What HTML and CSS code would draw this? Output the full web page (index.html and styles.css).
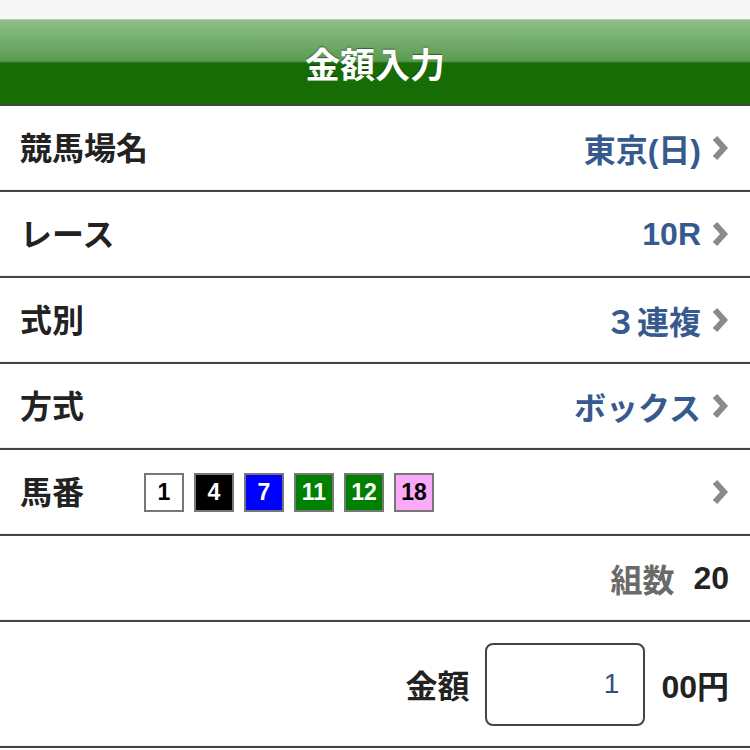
FILE: index.html
```html
<!DOCTYPE html>
<html lang="ja">

<head>
    <meta charset="UTF-8">
    <meta name="viewport" content="width=device-width, initial-scale=1.0">
    <title>金額入力</title>
    <link rel="stylesheet" href="styles.css">
</head>

<body>

    <div class="topbar"></div>
    <header class="title-bar">
        <h1>金額入力</h1>
    </header>

    <ul class="list">
        <li class="row">
            <span class="label">競馬場名</span>
            <span class="value">東京(日)</span>
            <svg class="chevron" width="18" height="26" viewBox="0 0 18 26"><polyline points="4,3 13,13 4,23" /></svg>
        </li>
        <li class="row">
            <span class="label">レース</span>
            <span class="value">10R</span>
            <svg class="chevron" width="18" height="26" viewBox="0 0 18 26"><polyline points="4,3 13,13 4,23" /></svg>
        </li>
        <li class="row">
            <span class="label">式別</span>
            <span class="value">３連複</span>
            <svg class="chevron" width="18" height="26" viewBox="0 0 18 26"><polyline points="4,3 13,13 4,23" /></svg>
        </li>
        <li class="row">
            <span class="label">方式</span>
            <span class="value">ボックス</span>
            <svg class="chevron" width="18" height="26" viewBox="0 0 18 26"><polyline points="4,3 13,13 4,23" /></svg>
        </li>
        <li class="row">
            <span class="label">馬番</span>
            <div class="horses">
                <span class="horse waku1">1</span>
                <span class="horse waku2">4</span>
                <span class="horse waku4">7</span>
                <span class="horse waku6">11</span>
                <span class="horse waku6">12</span>
                <span class="horse waku8">18</span>
            </div>
            <svg class="chevron" width="18" height="26" viewBox="0 0 18 26"><polyline points="4,3 13,13 4,23" /></svg>
        </li>
        <li class="row row-count">
            <span class="count-label">組数</span>
            <span class="count">20</span>
        </li>
        <li class="row row-amount">
            <span class="amount-label">金額</span>
            <div class="amount-box">1</div>
            <span class="unit">00円</span>
        </li>
    </ul>

</body>

</html>
```

FILE: styles.css
```css
body {
    margin: 0;
    background: #fff;
    font-family: "Liberation Sans", "Noto Sans CJK JP", sans-serif;
    color: #222;
}

.topbar {
    height: 19px;
    background: #f6f6f6;
    border-bottom: 1px solid #b9c9b3;
}

.title-bar {
    height: 84px;
    background: linear-gradient(to bottom, #8ebf87 0%, #5c9c52 48%, #4a8d3e 50%, #176c05 51%, #176c05 100%);
    border-bottom: 2px solid #3f4a3c;
    display: flex;
    align-items: center;
    justify-content: center;
}

.title-bar h1 {
    margin: 0;
    color: #fff;
    font-size: 35px;
    font-weight: bold;
    text-shadow: 0 -1px 1px rgba(0, 0, 0, 0.45);
}

.list {
    list-style: none;
    margin: 0;
    padding: 0;
}

.row {
    height: 84px;
    border-bottom: 2px solid #444;
    box-shadow: inset 0 -1px 0 #efefef;
    display: flex;
    align-items: center;
    padding: 0 21px 0 20px;
}

.label {
    font-size: 32px;
    font-weight: bold;
    margin-top: -4px;
}

.value {
    margin-left: auto;
    font-size: 32px;
    font-weight: bold;
    color: #375a8e;
}

.chevron {
    margin-left: 10px;
}

.chevron polyline {
    fill: none;
    stroke: #8a8a8a;
    stroke-width: 6;
}

.horses {
    display: flex;
    gap: 10px;
    margin-left: 60px;
    margin-right: auto;
}

.horse {
    width: 36px;
    height: 35px;
    border: 2px solid #777;
    display: flex;
    align-items: center;
    justify-content: center;
    font-size: 23px;
    font-weight: bold;
}

.waku1 { background: #fff; color: #000; }
.waku2 { background: #000; color: #fff; }
.waku4 { background: #0000ff; color: #fff; }
.waku6 { background: #008000; color: #fff; }
.waku8 { background: #faaaf8; color: #000; }

.row-count {
    justify-content: flex-end;
}

.count-label {
    font-size: 32px;
    font-weight: bold;
    color: #6a6a6a;
}

.count {
    font-size: 32px;
    font-weight: bold;
    margin-left: 19px;
}

.row-amount {
    height: 124px;
    justify-content: flex-end;
}

.amount-label {
    font-size: 32px;
    font-weight: bold;
}

.amount-box {
    width: 132px;
    height: 79px;
    margin: 0 16px;
    padding-right: 24px;
    border: 2px solid #444;
    border-radius: 8px;
    display: flex;
    align-items: center;
    justify-content: flex-end;
    font-size: 28px;
    color: #2f4f86;
}

.unit {
    font-size: 32px;
    font-weight: bold;
}
```
